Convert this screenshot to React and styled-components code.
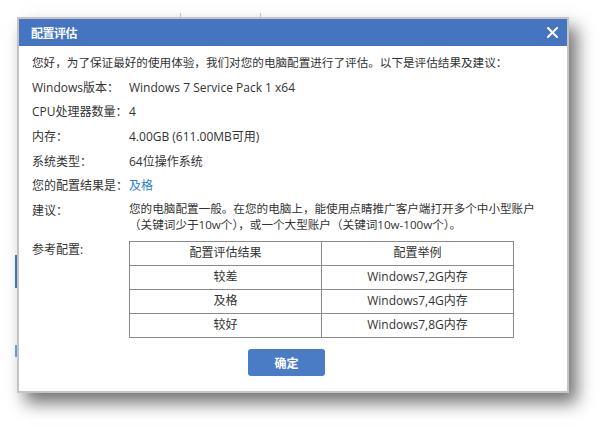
import React from "react";
import styled, { createGlobalStyle } from "styled-components";

const GlobalStyle = createGlobalStyle`
  html, body { margin: 0; padding: 0; background: #ffffff; }
  body {
    font-family: "Open Sans", "Noto Sans CJK SC", sans-serif;
    font-size: 12px;
    color: #333333;
  }
  * { box-sizing: border-box; }
`;

const Page = styled.div`
  position: relative;
  width: 605px;
  height: 432px;
  overflow: hidden;
  background: #ffffff;
`;

const BackdropStrip = styled.div`
  position: absolute;
  left: 15px;
  top: ${(p) => p.$top}px;
  width: 3px;
  height: ${(p) => p.$h}px;
  background: ${(p) => p.$c};
`;

const BackdropTick = styled.div`
  position: absolute;
  left: ${(p) => p.$left}px;
  top: 13px;
  width: 1px;
  height: 5px;
  background: #c8c8c8;
`;

const Dialog = styled.div`
  position: absolute;
  left: 17px;
  top: 17px;
  width: 552px;
  height: 376px;
  background: #ffffff;
  border: 2px solid #c4c4c4;
  box-shadow: 8px 10px 16px rgba(0, 0, 0, 0.55);
  display: flex;
  flex-direction: column;
`;

const Header = styled.div`
  height: 27px;
  background: #4575c0;
  display: flex;
  align-items: center;
  justify-content: space-between;
  padding: 0 9px 0 12px;
`;

const Title = styled.span`
  color: #ffffff;
  font-family: "Noto Sans CJK SC", sans-serif;
  font-size: 12px;
  font-weight: 700;
  letter-spacing: -0.5px;
`;

const CloseButton = styled.button`
  border: 0;
  background: transparent;
  padding: 0;
  width: 12px;
  height: 12px;
  display: flex;
  align-items: center;
  justify-content: center;
  cursor: pointer;
`;

const Body = styled.div`
  flex: 1;
  padding: 5px 13px 0 13px;
  display: flex;
  flex-direction: column;
`;

const Intro = styled.div`
  font-size: 11.6px;
  line-height: 24.8px;
  white-space: nowrap;
`;

const InfoRow = styled.div`
  display: grid;
  grid-template-columns: 97px 1fr;
  line-height: 24.6px;
  white-space: nowrap;
`;

const Label = styled.span`
  color: #333333;
`;

const Value = styled.span`
  color: #333333;
`;

const Link = styled.a`
  color: #2f7bd0;
  text-decoration: none;
  cursor: pointer;
`;

const SuggestRow = styled.div`
  display: grid;
  grid-template-columns: 97px 1fr;
  padding-top: 2px;
`;

const SuggestLabel = styled.span`
  line-height: 16px;
  padding-top: 2px;
`;

const Paragraph = styled.p`
  margin: 0;
  font-size: 11.6px;
  line-height: 16px;
`;

const RefRow = styled.div`
  display: grid;
  grid-template-columns: 97px 385px;
  margin-top: 8px;
`;

const RefLabel = styled.span`
  line-height: 16px;
  padding-top: 1px;
`;

const Table = styled.table`
  width: 385px;
  border-collapse: collapse;
  table-layout: fixed;
`;

const Cell = styled.td`
  border: 1px solid #8a8a8a;
  height: 24px;
  padding: 0;
  text-align: center;
  vertical-align: middle;
  color: #333333;
  line-height: 22px;
`;

const Footer = styled.div`
  padding: 11px 0 0 216px;
`;

const ConfirmButton = styled.button`
  width: 77px;
  height: 27px;
  border: 0;
  border-radius: 3px;
  background: #4a7cc6;
  color: #ffffff;
  font-family: "Noto Sans CJK SC", sans-serif;
  font-size: 12px;
  font-weight: 700;
  cursor: pointer;
`;

const info = [
  ["Windows版本：", "Windows 7 Service Pack 1 x64"],
  ["CPU处理器数量：", "4"],
  ["内存：", "4.00GB (611.00MB可用)"],
  ["系统类型：", "64位操作系统"],
];

const refs = [
  ["较差", "Windows7,2G内存"],
  ["及格", "Windows7,4G内存"],
  ["较好", "Windows7,8G内存"],
];

export default function App() {
  return (
    <>
      <GlobalStyle />
      <Page>
        <BackdropTick $left={180} />
        <BackdropTick $left={260} />
        <BackdropStrip $top={255} $h={33} $c="#4a7cc6" />
        <BackdropStrip $top={345} $h={12} $c="#7fa6dc" />
        <Dialog>
          <Header>
            <Title>配置评估</Title>
            <CloseButton aria-label="关闭">
              <svg width="11" height="11" viewBox="0 0 11 11">
                <path d="M1 1 L10 10 M10 1 L1 10" stroke="#ffffff" strokeWidth="2" strokeLinecap="square" />
              </svg>
            </CloseButton>
          </Header>
          <Body>
            <Intro>您好，为了保证最好的使用体验，我们对您的电脑配置进行了评估。以下是评估结果及建议：</Intro>
            {info.map(([k, v]) => (
              <InfoRow key={k}>
                <Label>{k}</Label>
                <Value>{v}</Value>
              </InfoRow>
            ))}
            <InfoRow>
              <Label>您的配置结果是：</Label>
              <Link>及格</Link>
            </InfoRow>
            <SuggestRow>
              <SuggestLabel>建议：</SuggestLabel>
              <Paragraph>
                您的电脑配置一般。在您的电脑上，能使用点睛推广客户端打开多个中小型账户（关键词少于10w个），或一个大型账户（关键词10w-100w个）。
              </Paragraph>
            </SuggestRow>
            <RefRow>
              <RefLabel>参考配置:</RefLabel>
              <Table>
                <tbody>
                  <tr>
                    <Cell>配置评估结果</Cell>
                    <Cell>配置举例</Cell>
                  </tr>
                  {refs.map(([a, b]) => (
                    <tr key={a}>
                      <Cell>{a}</Cell>
                      <Cell>{b}</Cell>
                    </tr>
                  ))}
                </tbody>
              </Table>
            </RefRow>
            <Footer>
              <ConfirmButton>确定</ConfirmButton>
            </Footer>
          </Body>
        </Dialog>
      </Page>
    </>
  );
}
